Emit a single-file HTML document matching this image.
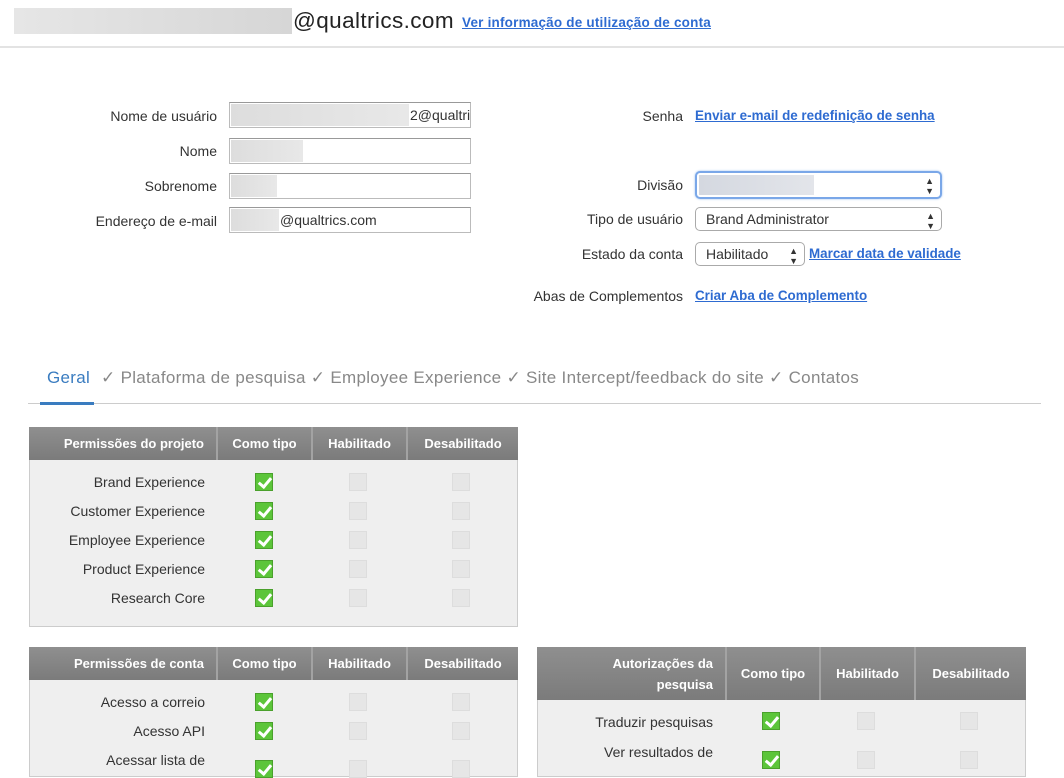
<!DOCTYPE html>
<html><head><meta charset="utf-8"><style>
*{box-sizing:border-box;margin:0;padding:0}
body{width:1064px;height:766px;overflow:hidden;background:#fff;font-family:"Liberation Sans",sans-serif;color:#333;position:relative;font-size:14px}
.a{position:absolute;white-space:nowrap}
.lbl{position:absolute;text-align:right;font-size:14px;color:#333;white-space:nowrap}
.inp{position:absolute;height:26px;border:1px solid #bbb;border-top-color:#999;background:#fff;overflow:hidden;font-size:14px;line-height:24px}
.blur{position:absolute;top:1px;bottom:1px;background:linear-gradient(90deg,#ddd,#e8e8e8)}
a,.lk{color:#2e6bd1;text-decoration:underline;font-weight:bold;font-size:13.4px}
.sel{position:absolute;height:24px;border:1px solid #aaa;border-radius:5px;background:#fff;font-size:14px;line-height:22px;padding-left:10px}
.sel .ar{position:absolute;right:6px;top:0;font-size:9px;line-height:10px;top:3px}
.tbl{position:absolute;background:#efefef;border:1px solid #ccc}
.hd{position:absolute;background:linear-gradient(#8f8f8f,#7b7b7b);color:#fff;font-weight:bold;font-size:13px}
.hd div{position:absolute;top:0;bottom:0;display:flex;align-items:center;justify-content:center;border-left:2px solid #a3a3a3}
.rl{position:absolute;text-align:right;font-size:14px;color:#333;white-space:nowrap}
.ck{position:absolute;width:18px;height:18px;background:#5cc53a;border:1px solid #4aa02c}
.ck:after{content:"";position:absolute;left:5px;top:1px;width:5px;height:10px;border:solid #fff;border-width:0 3px 3px 0;transform:rotate(40deg)}
.ub{position:absolute;width:18px;height:18px;background:#e6e6e6;border:1px solid #ddd}
.tab{position:absolute;top:368px;font-size:17px;letter-spacing:0.3px;color:#888;white-space:nowrap}
</style></head><body>
<div class="a" style="left:14px;top:8px;width:278px;height:26px;background:linear-gradient(90deg,#e6e6e6,#d6d6d6)"></div>
<div class="a" style="left:293px;top:8px;font-size:22.5px;letter-spacing:0.4px;color:#222">@qualtrics.com</div>
<a class="a" style="left:462px;top:15px;font-size:13.5px;letter-spacing:0.2px">Ver informação de utilização de conta</a>
<div class="a" style="left:0;top:46px;width:1064px;height:2px;background:#e3e3e3"></div>

<div class="lbl" style="right:847px;top:108px">Nome de usuário</div>
<div class="inp" style="left:229px;top:102px;width:242px"><div class="blur" style="left:1px;width:178px"></div><span style="position:absolute;left:180px">2@qualtric</span></div>
<div class="lbl" style="right:847px;top:143px">Nome</div>
<div class="inp" style="left:229px;top:138px;width:242px"><div class="blur" style="left:1px;width:72px"></div></div>
<div class="lbl" style="right:847px;top:178px">Sobrenome</div>
<div class="inp" style="left:229px;top:173px;width:242px"><div class="blur" style="left:1px;width:46px"></div></div>
<div class="lbl" style="right:847px;top:213px">Endereço de e-mail</div>
<div class="inp" style="left:229px;top:207px;width:242px"><div class="blur" style="left:1px;width:48px"></div><span style="position:absolute;left:50px">@qualtrics.com</span></div>

<div class="lbl" style="right:381px;top:108px">Senha</div>
<a class="a" style="left:695px;top:108px">Enviar e-mail de redefinição de senha</a>
<div class="lbl" style="right:381px;top:177px">Divisão</div>
<div class="sel" style="left:695px;top:171px;width:247px;height:28px;border:2px solid #7aa7e8;box-shadow:0 0 2px #9bbff0"><div style="position:absolute;left:2px;top:2px;width:115px;height:20px;background:linear-gradient(90deg,#d4d8e0,#e3e5ea)"></div><span class="ar">▲<br>▼</span></div>
<div class="lbl" style="right:381px;top:211px">Tipo de usuário</div>
<div class="sel" style="left:695px;top:207px;width:247px">Brand Administrator<span class="ar">▲<br>▼</span></div>
<div class="lbl" style="right:381px;top:246px">Estado da conta</div>
<div class="sel" style="left:695px;top:242px;width:110px">Habilitado<span class="ar">▲<br>▼</span></div>
<a class="a" style="left:809px;top:246px">Marcar data de validade</a>
<div class="lbl" style="right:381px;top:288px">Abas de Complementos</div>
<a class="a" style="left:695px;top:288px">Criar Aba de Complemento</a>

<div class="tab" style="left:47px;color:#3a7cc0">Geral</div>
<div class="tab" style="left:101px">✓ Plataforma de pesquisa ✓ Employee Experience ✓ Site Intercept/feedback do site ✓ Contatos</div>
<div class="a" style="left:28px;top:403px;width:1013px;height:1px;background:#ccc"></div>
<div class="a" style="left:40px;top:402px;width:54px;height:3px;background:#3a7cc0"></div>

<div class="tbl" style="left:29px;top:427px;width:489px;height:200px"></div>
<div class="hd" style="left:29px;top:427px;width:489px;height:33px">
<div style="left:0;width:187px;border:none;justify-content:flex-end;padding-right:12px">Permissões do projeto</div>
<div style="left:187px;width:95px">Como tipo</div><div style="left:282px;width:95px">Habilitado</div><div style="left:377px;width:112px">Desabilitado</div></div>
<div class="rl" style="right:859px;top:474px">Brand Experience</div>
<div class="rl" style="right:859px;top:503px">Customer Experience</div>
<div class="rl" style="right:859px;top:532px">Employee Experience</div>
<div class="rl" style="right:859px;top:561px">Product Experience</div>
<div class="rl" style="right:859px;top:590px">Research Core</div>
<div class="ck" style="left:255px;top:473px"></div><div class="ub" style="left:349px;top:473px"></div><div class="ub" style="left:452px;top:473px"></div>
<div class="ck" style="left:255px;top:502px"></div><div class="ub" style="left:349px;top:502px"></div><div class="ub" style="left:452px;top:502px"></div>
<div class="ck" style="left:255px;top:531px"></div><div class="ub" style="left:349px;top:531px"></div><div class="ub" style="left:452px;top:531px"></div>
<div class="ck" style="left:255px;top:560px"></div><div class="ub" style="left:349px;top:560px"></div><div class="ub" style="left:452px;top:560px"></div>
<div class="ck" style="left:255px;top:589px"></div><div class="ub" style="left:349px;top:589px"></div><div class="ub" style="left:452px;top:589px"></div>

<div class="tbl" style="left:29px;top:647px;width:489px;height:130px"></div>
<div class="hd" style="left:29px;top:647px;width:489px;height:33px">
<div style="left:0;width:187px;border:none;justify-content:flex-end;padding-right:12px">Permissões de conta</div>
<div style="left:187px;width:95px">Como tipo</div><div style="left:282px;width:95px">Habilitado</div><div style="left:377px;width:112px">Desabilitado</div></div>
<div class="rl" style="right:859px;top:694px">Acesso a correio</div>
<div class="rl" style="right:859px;top:723px">Acesso API</div>
<div class="rl" style="right:859px;top:752px">Acessar lista de</div>
<div class="ck" style="left:255px;top:693px"></div><div class="ub" style="left:349px;top:693px"></div><div class="ub" style="left:452px;top:693px"></div>
<div class="ck" style="left:255px;top:722px"></div><div class="ub" style="left:349px;top:722px"></div><div class="ub" style="left:452px;top:722px"></div>
<div class="ck" style="left:255px;top:760px"></div><div class="ub" style="left:349px;top:760px"></div><div class="ub" style="left:452px;top:760px"></div>

<div class="tbl" style="left:537px;top:647px;width:489px;height:130px"></div>
<div class="hd" style="left:537px;top:647px;width:489px;height:53px">
<div style="left:0;width:188px;border:none;justify-content:flex-end;padding-right:12px;text-align:right;line-height:21px">Autorizações da<br>pesquisa</div>
<div style="left:188px;width:94px">Como tipo</div><div style="left:282px;width:95px">Habilitado</div><div style="left:377px;width:112px">Desabilitado</div></div>
<div class="rl" style="right:351px;top:714px">Traduzir pesquisas</div>
<div class="rl" style="right:351px;top:744px">Ver resultados de</div>
<div class="ck" style="left:762px;top:712px"></div><div class="ub" style="left:857px;top:712px"></div><div class="ub" style="left:960px;top:712px"></div>
<div class="ck" style="left:762px;top:751px"></div><div class="ub" style="left:857px;top:751px"></div><div class="ub" style="left:960px;top:751px"></div>
</body></html>
